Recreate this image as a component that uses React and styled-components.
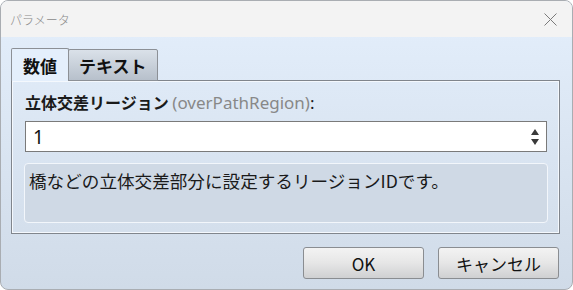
import React from 'react';
import styled, { createGlobalStyle } from 'styled-components';

const GlobalStyle = createGlobalStyle`
  html, body {
    margin: 0;
    padding: 0;
    background: #ffffff;
  }
  * {
    box-sizing: border-box;
  }
`;

const Window = styled.div`
  width: 573px;
  height: 290px;
  border: 1px solid #a9adb2;
  border-radius: 8px;
  overflow: hidden;
  display: flex;
  flex-direction: column;
  font-family: "Noto Sans", "Noto Sans CJK JP", sans-serif;
  background: linear-gradient(to bottom, #e4effc 0%, #d0dbe8 100%);
`;

const TitleBar = styled.div`
  height: 36px;
  flex: none;
  background: #f3f3f3;
  display: flex;
  align-items: center;
  justify-content: space-between;
  padding: 0 15px 0 9px;
`;

const Title = styled.span`
  font-size: 12px;
  color: #8a8a8a;
  font-family: "Noto Sans CJK JP", sans-serif;
  font-weight: 300;
`;

const CloseButton = styled.button`
  border: none;
  background: none;
  padding: 0;
  width: 14px;
  height: 14px;
  display: flex;
  align-items: center;
  justify-content: center;
`;

const Body = styled.div`
  flex: 1;
  display: flex;
  flex-direction: column;
  padding: 11px 12px 0 10px;
`;

const TabRow = styled.div`
  display: flex;
  height: 33px;
  align-items: flex-end;
  margin-bottom: -1px;
  position: relative;
  z-index: 1;
`;

const Tab = styled.div`
  height: ${p => (p.active ? '33px' : '32px')};
  padding: 0 ${p => (p.active ? '11px' : '10px')};
  display: flex;
  align-items: center;
  font-family: "Noto Sans CJK JP", sans-serif;
  font-size: 17px;
  font-weight: 700;
  color: #111;
  border: 1px solid #8c9096;
  border-bottom: ${p => (p.active ? 'none' : '1px solid #8c9096')};
  border-radius: 2px 2px 0 0;
  background: ${p => (p.active ? '#e4effc' : 'linear-gradient(to bottom, #dae1e9 0%, #b7c0cb 100%)')};
  margin-left: ${p => (p.active ? '0' : '-1px')};
`;

const Panel = styled.div`
  border: 1px solid #80858c;
  box-shadow: inset 0 0 0 1px #f4f8fd;
  height: 154px;
  padding: 10px 12px 10px 13px;
  display: flex;
  flex-direction: column;
`;

const Label = styled.div`
  font-family: "Noto Sans CJK JP", sans-serif;
  font-size: 16px;
  font-weight: 700;
  color: #1a1a1a;
  line-height: 22px;
  height: 30px;
`;

const Hint = styled.span`
  font-family: "Noto Sans", sans-serif;
  font-size: 17px;
  font-weight: 400;
  color: #888;
`;

const Colon = styled.span`
  font-family: "Noto Sans", sans-serif;
  font-size: 17px;
  font-weight: 400;
`;

const NumberBox = styled.div`
  height: 31px;
  border: 1px solid #7a7a7a;
  background: #fff;
  display: flex;
  align-items: center;
  justify-content: space-between;
  padding: 0 7px 0 7px;
`;

const NumberValue = styled.span`
  font-family: "Noto Sans", sans-serif;
  font-size: 19px;
  color: #111;
`;

const Spinner = styled.div`
  display: flex;
  flex-direction: column;
  gap: 4px;
`;

const Description = styled.div`
  margin-top: 11px;
  margin-left: -1px;
  margin-right: -1px;
  height: 60px;
  border: 1px solid #f2f6fb;
  border-radius: 4px;
  background: #cfd9e5;
  padding: 6px 4px;
  font-family: "Noto Sans CJK JP", sans-serif;
  font-size: 17.6px;
  color: #1a1a1a;
  line-height: 22px;
`;

const Footer = styled.div`
  display: flex;
  justify-content: flex-end;
  gap: 14px;
  padding-top: 13px;
  padding-right: 1px;
`;

const Button = styled.button`
  width: 121px;
  height: 32px;
  border: 1px solid #8a8d91;
  border-radius: 3px;
  background: linear-gradient(to bottom, #f3f3f3 0%, #e6e6e6 50%, #cfd0d2 100%);
  font-family: "Noto Sans CJK JP", sans-serif;
  font-size: 17px;
  font-weight: 400;
  color: #111;
  padding: 0;
`;

const Arrow = ({ up }) => (
  <svg width="8" height="6" viewBox="0 0 8 6">
    <polygon points={up ? '4,0 8,6 0,6' : '0,0 8,0 4,6'} fill="#3a3a3a" />
  </svg>
);

export default function App() {
  return (
    <>
      <GlobalStyle />
      <Window>
        <TitleBar>
          <Title>パラメータ</Title>
          <CloseButton>
            <svg width="13" height="13" viewBox="0 0 13 13">
              <path d="M0.5 0.5 L12.5 12.5 M12.5 0.5 L0.5 12.5" stroke="#7a7a7a" strokeWidth="1" />
            </svg>
          </CloseButton>
        </TitleBar>
        <Body>
          <TabRow>
            <Tab active>数値</Tab>
            <Tab>テキスト</Tab>
          </TabRow>
          <Panel>
            <Label>
              立体交差リージョン <Hint>(overPathRegion)</Hint><Colon>:</Colon>
            </Label>
            <NumberBox>
              <NumberValue>1</NumberValue>
              <Spinner>
                <Arrow up />
                <Arrow />
              </Spinner>
            </NumberBox>
            <Description>橋などの立体交差部分に設定するリージョンIDです。</Description>
          </Panel>
          <Footer>
            <Button>OK</Button>
            <Button>キャンセル</Button>
          </Footer>
        </Body>
      </Window>
    </>
  );
}
